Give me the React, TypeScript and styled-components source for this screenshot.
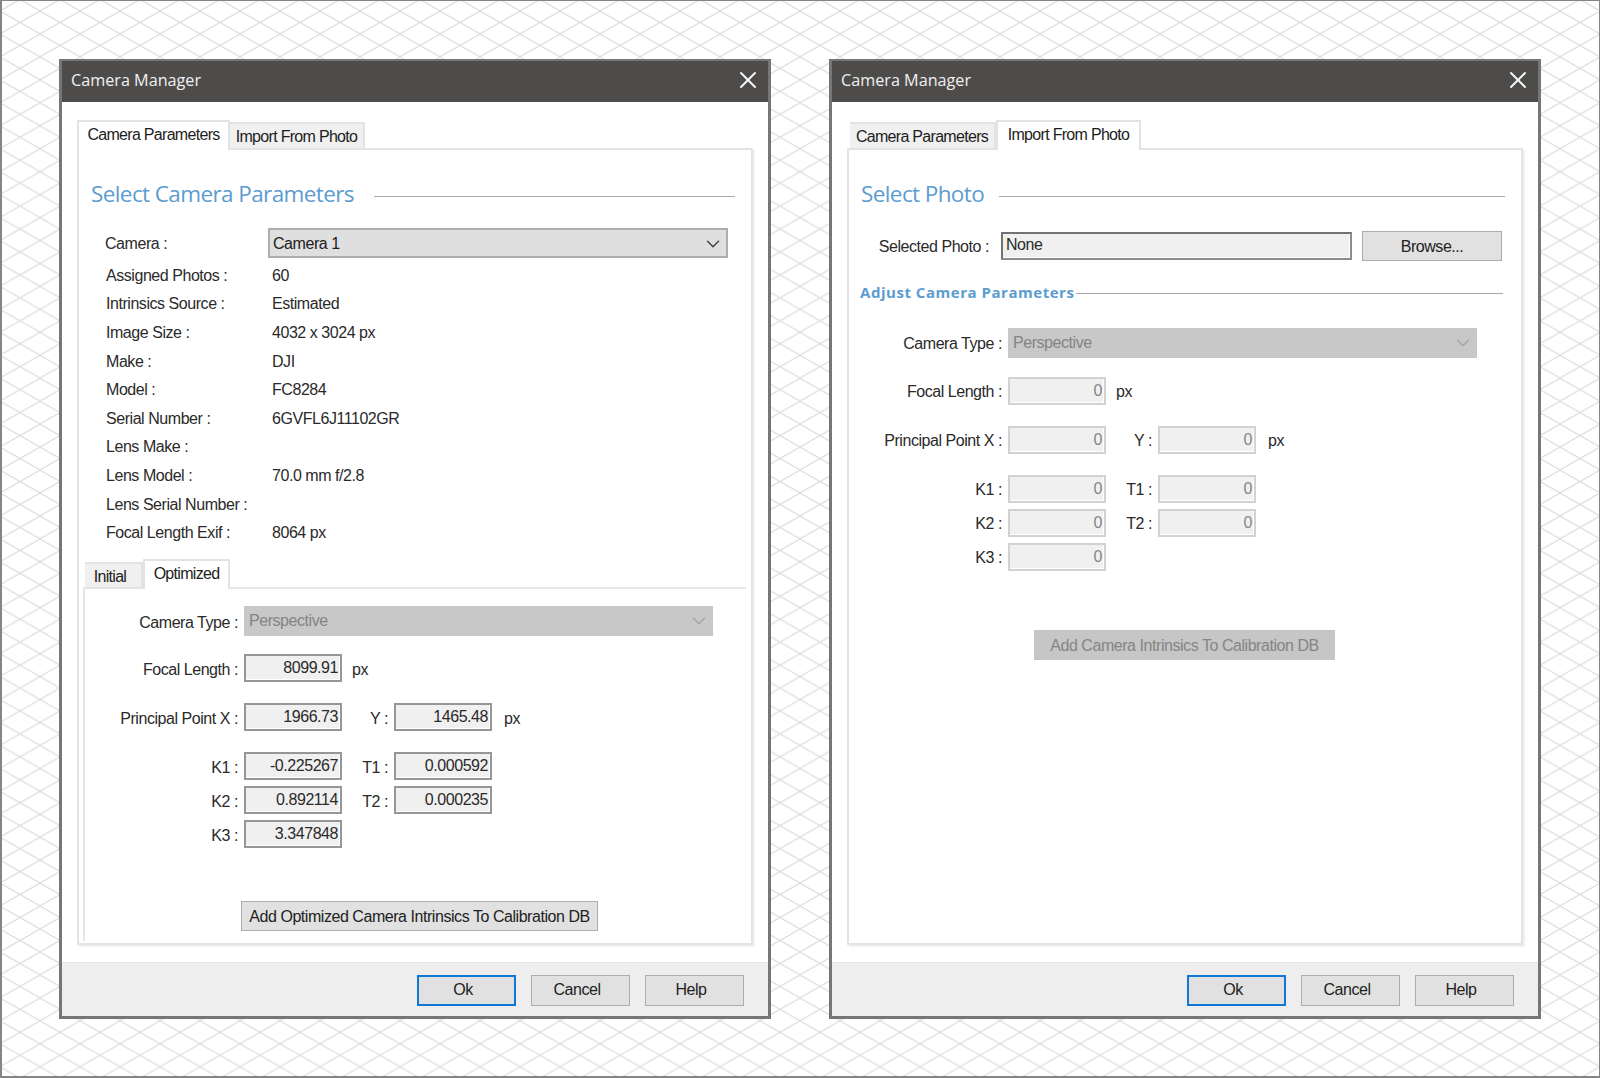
import { Fragment, type ReactNode } from 'react';
import styled, { createGlobalStyle } from 'styled-components';
import { X, ChevronDown } from 'lucide-react';

const GlobalStyle = createGlobalStyle`
  html, body { margin: 0; padding: 0; background: #fff; }
  * { box-sizing: border-box; }
`;

const uiFont = `"Liberation Sans", Arial, sans-serif`;
const headFont = `"Open Sans", "Noto Sans", sans-serif`;

const Page = styled.div`
  position: relative;
  width: 1600px;
  height: 1078px;
  overflow: hidden;
  display: flex;
  align-items: center;
  gap: 58px;
  padding-left: 57px;
  background: #fff;
  border-style: solid;
  border-color: #858585;
  border-width: 1px 1px 2px 2px;
  font-family: ${uiFont};
  font-size: 16px;
  letter-spacing: -0.45px;
  color: #2a2a2a;
`;

const Backdrop = styled.svg`
  position: absolute;
  left: -2px;
  top: -1px;
  width: 1600px;
  height: 1078px;
`;

const Dialog = styled.section`
  position: relative;
  width: 712px;
  height: 960px;
  flex: none;
  display: flex;
  flex-direction: column;
  background: #fff;
  border: 3px solid #767676;
  border-top-width: 2px;
`;

const TitleBar = styled.header`
  height: 41px;
  flex: none;
  display: flex;
  align-items: center;
  justify-content: space-between;
  padding: 0 6px 0 9px;
  background: #4e4c4a;
`;

const Title = styled.h1`
  margin: 0 0 3px;
  font: 400 16.2px ${headFont};
  letter-spacing: 0;
  color: #f0f0f0;
`;

const CloseIcon = styled(X)`
  color: #f4f4f4;
  margin-bottom: 2px;
`;

const Body = styled.div`
  flex: 1;
  min-height: 0;
  display: flex;
  flex-direction: column;
  padding: 18px 15px 17px;
`;

const TabStrip = styled.div<{ $inset?: number }>`
  flex: none;
  height: 30px;
  display: flex;
  align-items: flex-end;
  padding-left: ${(p) => p.$inset ?? 0}px;
  margin-bottom: -2px;
  position: relative;
  z-index: 1;
`;

const Tab = styled.div<{ $active?: boolean; $width: number }>`
  width: ${(p) => p.$width}px;
  height: ${(p) => (p.$active ? 30 : 28)}px;
  display: flex;
  align-items: center;
  justify-content: center;
  padding-top: ${(p) => (p.$active ? 0 : 2)}px;
  padding-bottom: ${(p) => (p.$active ? 2 : 0)}px;
  background: ${(p) => (p.$active ? '#fff' : '#f0f0f0')};
  border: 2px solid #e3e3e3;
  border-bottom: ${(p) => (p.$active ? 'none' : '2px solid #e3e3e3')};
  border-left-width: ${(p) => (p.$active ? 2 : 0)}px;
  color: #1d1d1d;
  letter-spacing: -0.7px;
  white-space: nowrap;
`;

const Panel = styled.div`
  flex: 1;
  min-height: 0;
  display: flex;
  flex-direction: column;
  border: 2px solid #e3e3e3;
  box-shadow: 2px 2px 0 #f1f1f1;
`;

const Section = styled.div`
  flex: none;
  padding: 28px 16px 0 12px;
`;

const Heading = styled.div`
  display: flex;
  align-items: center;
  height: 32px;
`;

const HeadingText = styled.h2`
  margin: 0;
  font: 400 22.5px ${headFont};
  letter-spacing: -0.6px;
  color: #5c9ccf;
  white-space: nowrap;
`;

const Rule = styled.div<{ $gap: number; $drop: number }>`
  flex: 1;
  height: 1px;
  margin-left: ${(p) => p.$gap}px;
  margin-top: ${(p) => p.$drop}px;
  background: #a9a9a9;
`;

const SubHeading = styled.div`
  display: flex;
  align-items: center;
  height: 20px;
  margin-top: 21px;
  margin-right: 2px;
  margin-left: -1px;
`;

const SubHeadingText = styled.h3`
  margin: 0;
  font: 700 15px ${headFont};
  color: #5c9ccf;
  letter-spacing: 0.53px;
  white-space: nowrap;
`;

const CameraRow = styled.div`
  display: flex;
  align-items: center;
  margin-top: 18px;
  padding-left: 14px;
`;

const CameraLabel = styled.span`
  width: 163px;
  padding-top: 2px;
`;

const Select = styled.div<{ $disabled?: boolean; $width: number; $height: number }>`
  width: ${(p) => p.$width}px;
  height: ${(p) => p.$height}px;
  display: flex;
  align-items: center;
  justify-content: space-between;
  padding: ${(p) => (p.$disabled ? '0 2px 0 4px' : '2px 2px 0 3px')};
  background: ${(p) => (p.$disabled ? '#c8c8c8' : '#dfdfdf')};
  border: ${(p) => (p.$disabled ? '1px solid #c6c6c6' : '2px solid #adadad')};
  color: ${(p) => (p.$disabled ? '#848484' : '#202020')};
`;

const SelectChevron = styled(ChevronDown)<{ $disabled?: boolean }>`
  color: ${(p) => (p.$disabled ? '#a4a4a4' : '#444')};
  flex: none;
`;

const InfoGrid = styled.div`
  display: grid;
  grid-template-columns: 166px 1fr;
  grid-auto-rows: 28.6px;
  align-items: center;
  margin-top: 4px;
  padding-left: 15px;
`;

const SubTabs = styled.div`
  flex: 1;
  min-height: 0;
  display: flex;
  flex-direction: column;
  margin: 12px 5px 2px 4px;
`;

const SubTabStrip = styled(TabStrip)`
  height: 30px;
`;

const SubTab = styled(Tab)`
  height: ${(p) => (p.$active ? 30 : 27)}px;
  padding-right: ${(p) => (p.$active ? 0 : 6)}px;
`;

const SubPanel = styled.div`
  flex: 1;
  min-height: 0;
  display: flex;
  flex-direction: column;
  border-top: 2px solid #e6e6e6;
  border-left: 2px solid #e6e6e6;
`;

const Form = styled.div<{ $top: number }>`
  flex: none;
  display: flex;
  flex-direction: column;
  padding-top: ${(p) => p.$top}px;
`;

const FieldRow = styled.div<{ $after: number }>`
  display: flex;
  align-items: center;
  margin-bottom: ${(p) => p.$after}px;
`;

const FieldLabel = styled.span<{ $width: number }>`
  width: ${(p) => p.$width}px;
  margin-right: 6px;
  padding-top: 3px;
  text-align: right;
  white-space: nowrap;
`;

const ValueBox = styled.div<{ $disabled?: boolean }>`
  width: 98px;
  height: 28px;
  padding: 0 2px 0 0;
  display: flex;
  align-items: center;
  justify-content: flex-end;
  background: #f0f0f0;
  border: 2px solid ${(p) => (p.$disabled ? '#d2d2d2' : '#969696')};
  box-shadow: inset -1px -1px 0 #fff;
  color: ${(p) => (p.$disabled ? '#868686' : '#2a2a2a')};
`;

const Unit = styled.span<{ $left: number }>`
  margin-left: ${(p) => p.$left}px;
  padding-top: 3px;
`;

const PhotoRow = styled.div`
  display: flex;
  align-items: center;
  height: 30px;
  margin-top: 21px;
`;

const PhotoLabel = styled.span`
  width: 140px;
  padding: 2px 12px 0 0;
  text-align: right;
  white-space: nowrap;
`;

const PhotoBox = styled.div`
  width: 351px;
  height: 28px;
  padding: 0 0 1px 3px;
  display: flex;
  align-items: center;
  background: #f0f0f0;
  border: 2px solid #8c8c8c;
  border-top-color: #727272;
  border-left-color: #727272;
  box-shadow: inset -1px -1px 0 #fff;
`;

const Button = styled.button<{ $disabled?: boolean; $primary?: boolean; $width: number; $height: number }>`
  width: ${(p) => p.$width}px;
  height: ${(p) => p.$height}px;
  flex: none;
  padding: 0;
  font: inherit;
  letter-spacing: inherit;
  white-space: nowrap;
  background: ${(p) => (p.$disabled ? '#c6c6c6' : '#e1e1e1')};
  color: ${(p) => (p.$disabled ? '#858585' : '#222')};
  border: ${(p) =>
    p.$primary ? '2px solid #0f78d4' : p.$disabled ? '1px solid #c6c6c6' : '1px solid #adadad'};
`;

const PanelButton = styled(Button)`
  padding-top: 2px;
`;

const BrowseButton = styled(PanelButton)`
  margin-left: 10px;
`;

const FooterButton = styled(Button)`
  padding-right: 7px;
`;

const AddRow = styled.div<{ $top: number; $left: number }>`
  display: flex;
  margin-top: ${(p) => p.$top}px;
  padding-left: ${(p) => p.$left}px;
`;

const Footer = styled.footer`
  flex: none;
  height: 54px;
  display: flex;
  justify-content: flex-end;
  gap: 15px;
  padding: 12px 24px 0 0;
  background: #eeeeee;
  border-top: 1px solid #e4e4e4;
`;

const infoRows: [string, string][] = [
  ['Assigned Photos :', '60'],
  ['Intrinsics Source :', 'Estimated'],
  ['Image Size :', '4032 x 3024 px'],
  ['Make :', 'DJI'],
  ['Model :', 'FC8284'],
  ['Serial Number :', '6GVFL6J11102GR'],
  ['Lens Make :', ''],
  ['Lens Model :', '70.0 mm f/2.8'],
  ['Lens Serial Number :', ''],
  ['Focal Length Exif :', '8064 px'],
];

interface CameraValues {
  focal: string;
  x: string;
  y: string;
  k1: string;
  k2: string;
  k3: string;
  t1: string;
  t2: string;
}

const optimized: CameraValues = {
  focal: '8099.91',
  x: '1966.73',
  y: '1465.48',
  k1: '-0.225267',
  k2: '0.892114',
  k3: '3.347848',
  t1: '0.000592',
  t2: '0.000235',
};

const zeros: CameraValues = { focal: '0', x: '0', y: '0', k1: '0', k2: '0', k3: '0', t1: '0', t2: '0' };

interface FormProps {
  values: CameraValues;
  disabled?: boolean;
  top: number;
  afterSelect: number;
}

const CameraForm = ({ values, disabled, top, afterSelect }: FormProps) => (
  <Form $top={top}>
    <FieldRow $after={afterSelect}>
      <FieldLabel $width={153}>Camera Type :</FieldLabel>
      <Select $disabled $width={469} $height={30}>
        Perspective
        <SelectChevron $disabled size={22} strokeWidth={1.5} />
      </Select>
    </FieldRow>
    <FieldRow $after={21}>
      <FieldLabel $width={153}>Focal Length :</FieldLabel>
      <ValueBox $disabled={disabled}>{values.focal}</ValueBox>
      <Unit $left={10}>px</Unit>
    </FieldRow>
    <FieldRow $after={21}>
      <FieldLabel $width={153}>Principal Point X :</FieldLabel>
      <ValueBox $disabled={disabled}>{values.x}</ValueBox>
      <FieldLabel $width={46}>Y :</FieldLabel>
      <ValueBox $disabled={disabled}>{values.y}</ValueBox>
      <Unit $left={12}>px</Unit>
    </FieldRow>
    <FieldRow $after={6}>
      <FieldLabel $width={153}>K1 :</FieldLabel>
      <ValueBox $disabled={disabled}>{values.k1}</ValueBox>
      <FieldLabel $width={46}>T1 :</FieldLabel>
      <ValueBox $disabled={disabled}>{values.t1}</ValueBox>
    </FieldRow>
    <FieldRow $after={6}>
      <FieldLabel $width={153}>K2 :</FieldLabel>
      <ValueBox $disabled={disabled}>{values.k2}</ValueBox>
      <FieldLabel $width={46}>T2 :</FieldLabel>
      <ValueBox $disabled={disabled}>{values.t2}</ValueBox>
    </FieldRow>
    <FieldRow $after={0}>
      <FieldLabel $width={153}>K3 :</FieldLabel>
      <ValueBox $disabled={disabled}>{values.k3}</ValueBox>
    </FieldRow>
  </Form>
);

const WindowShell = ({ children }: { children: ReactNode }) => (
  <Dialog>
    <TitleBar>
      <Title>Camera Manager</Title>
      <CloseIcon size={28} strokeWidth={1.7} />
    </TitleBar>
    {children}
    <Footer>
      <FooterButton $primary $width={99} $height={31}>Ok</FooterButton>
      <FooterButton $width={99} $height={31}>Cancel</FooterButton>
      <FooterButton $width={99} $height={31}>Help</FooterButton>
    </Footer>
  </Dialog>
);

const App = () => (
  <>
    <GlobalStyle />
    <Page>
      <Backdrop aria-hidden="true">
        <defs>
          <pattern id="iso" patternUnits="userSpaceOnUse" width="40" height="22.95" patternTransform="translate(0 11)">
            <path d="M0 0L40 22.95M0 22.95L40 0" stroke="#dcdcdc" strokeWidth="1.1" fill="none" />
          </pattern>
        </defs>
        <rect width="1600" height="1078" fill="url(#iso)" />
      </Backdrop>

      <WindowShell>
        <Body>
          <TabStrip>
            <Tab $active $width={153}>Camera Parameters</Tab>
            <Tab $width={135}>Import From Photo</Tab>
          </TabStrip>
          <Panel>
            <Section>
              <Heading>
                <HeadingText>Select Camera Parameters</HeadingText>
                <Rule $gap={20} $drop={5} />
              </Heading>
              <CameraRow>
                <CameraLabel>Camera :</CameraLabel>
                <Select $width={460} $height={30}>
                  Camera 1
                  <SelectChevron size={22} strokeWidth={1.6} />
                </Select>
              </CameraRow>
              <InfoGrid>
                {infoRows.map(([label, value]) => (
                  <Fragment key={label}>
                    <span>{label}</span>
                    <span>{value}</span>
                  </Fragment>
                ))}
              </InfoGrid>
            </Section>
            <SubTabs>
              <SubTabStrip $inset={2}>
                <SubTab $width={58}>Initial</SubTab>
                <SubTab $active $width={87}>Optimized</SubTab>
              </SubTabStrip>
              <SubPanel>
                <CameraForm values={optimized} top={17} afterSelect={18} />
                <AddRow $top={53} $left={156}>
                  <PanelButton $width={357} $height={30}>Add Optimized Camera Intrinsics To Calibration DB</PanelButton>
                </AddRow>
              </SubPanel>
            </SubTabs>
          </Panel>
        </Body>
      </WindowShell>

      <WindowShell>
        <Body>
          <TabStrip $inset={3}>
            <Tab $width={146}>Camera Parameters</Tab>
            <Tab $active $width={145}>Import From Photo</Tab>
          </TabStrip>
          <Panel>
            <Section>
              <Heading>
                <HeadingText>Select Photo</HeadingText>
                <Rule $gap={15} $drop={5} />
              </Heading>
              <PhotoRow>
                <PhotoLabel>Selected Photo :</PhotoLabel>
                <PhotoBox>None</PhotoBox>
                <BrowseButton $width={140} $height={30}>Browse...</BrowseButton>
              </PhotoRow>
              <SubHeading>
                <SubHeadingText>Adjust Camera Parameters</SubHeadingText>
                <Rule $gap={2} $drop={4} />
              </SubHeading>
            </Section>
            <CameraForm values={zeros} disabled top={26} afterSelect={19} />
            <AddRow $top={59} $left={185}>
              <PanelButton $disabled $width={301} $height={30}>Add Camera Intrinsics To Calibration DB</PanelButton>
            </AddRow>
          </Panel>
        </Body>
      </WindowShell>
    </Page>
  </>
);

export default App;
